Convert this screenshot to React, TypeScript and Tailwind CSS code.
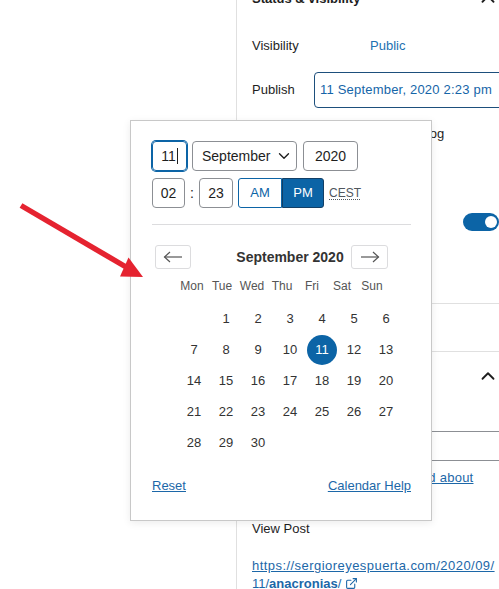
import { ChevronDown, ChevronUp, ExternalLink } from 'lucide-react';

// September 2020 starts on a Tuesday, so the first week has one blank slot
function buildWeeks(): (number | null)[][] {
  const weeks: (number | null)[][] = [];
  let week: (number | null)[] = [null];
  for (let d = 1; d <= 30; d++) {
    week.push(d);
    if (week.length === 7) {
      weeks.push(week);
      week = [];
    }
  }
  if (week.length) weeks.push(week);
  return weeks;
}

const dayNames = ['Mon', 'Tue', 'Wed', 'Thu', 'Fri', 'Sat', 'Sun'];

function NavArrow({ dir }: { dir: 'left' | 'right' }) {
  return (
    <svg width="20" height="12" viewBox="0 0 20 12" fill="none" stroke="#555" strokeWidth="1.2">
      {dir === 'left' ? (
        <>
          <path d="M1.5 6H19" />
          <path d="M7 1L1.5 6L7 11" />
        </>
      ) : (
        <>
          <path d="M1 6H18.5" />
          <path d="M13 1L18.5 6L13 11" />
        </>
      )}
    </svg>
  );
}

function DatePopover() {
  const weeks = buildWeeks();

  return (
    <div className="absolute left-[130px] top-[120px] z-10 w-[302px] border border-[#c8c8c8] bg-white pb-6 pl-[21px] pr-5 pt-5 shadow-[0_2px_8px_rgba(0,0,0,0.08)]">
      {/* day / month / year */}
      <div className="flex h-[30px] gap-[5px] text-[14px] text-[#1e1e1e]">
        <div className="flex w-[35px] items-center justify-center rounded border border-[#0c64a6] shadow-[0_0_0_1px_#0c64a6]">
          11<span className="ml-px h-4 w-px bg-[#1e1e1e]" />
        </div>
        <div className="flex w-[105px] items-center justify-between rounded border border-[#8c8f94] pl-[9px] pr-[3px]">
          <span>September</span>
          <ChevronDown size={18} strokeWidth={1.8} color="#1e1e1e" />
        </div>
        <div className="ml-px flex w-[55px] items-center justify-center rounded border border-[#8c8f94]">2020</div>
      </div>

      {/* time */}
      <div className="mt-[7px] flex h-[30px] items-center text-[14px] text-[#1e1e1e]">
        <div className="flex h-full w-[33px] items-center justify-center rounded border border-[#8c8f94]">02</div>
        <span className="w-[14px] text-center">:</span>
        <div className="flex h-full w-[34px] items-center justify-center rounded border border-[#8c8f94]">23</div>
        <div className="ml-[5px] flex h-full text-[13px]">
          <button className="w-[44px] rounded-l-[3px] border border-[#0c64a6] bg-white text-[#0c64a6]">AM</button>
          <button className="w-[42px] rounded-r-[3px] border border-[#123f66] bg-[#0c64a6] text-white">PM</button>
        </div>
        <abbr className="ml-[5px] text-[12px] text-[#50575e] underline decoration-dotted underline-offset-2">
          CEST
        </abbr>
      </div>

      <div className="mt-4 h-px bg-[#dcdcde]" />

      {/* month navigation */}
      <div className="ml-[3px] mt-5 flex h-6 items-center">
        <button className="flex h-6 w-[36px] items-center justify-center rounded-[3px] border border-[#dcdcde] bg-white">
          <NavArrow dir="left" />
        </button>
        <div className="w-[160px] pl-[38px] text-center text-[14px] font-bold text-[#333]">September 2020</div>
        <button className="flex h-6 w-[37px] items-center justify-center rounded-[3px] border border-[#dcdcde] bg-white">
          <NavArrow dir="right" />
        </button>
      </div>

      {/* weekday headings */}
      <div className="ml-[25px] mt-[9px] grid h-4 grid-cols-[repeat(7,30px)] text-center text-[12px] leading-4 text-[#555]">
        {dayNames.map((d) => (
          <span key={d}>{d}</span>
        ))}
      </div>

      {/* days */}
      <div className="ml-[26px] mt-[9px] grid grid-cols-[repeat(7,32px)] text-[13px] text-[#333]">
        {weeks.flat().map((day, i) => (
          <div key={i} className="flex h-[31px] items-center justify-center">
            {day === 11 ? (
              <span className="flex size-[30px] items-center justify-center rounded-full bg-[#0c64a6] text-white">
                {day}
              </span>
            ) : (
              day
            )}
          </div>
        ))}
      </div>

      <div className="mt-[18px] flex h-5 items-center justify-between text-[13px] text-[#1c67a8] underline">
        <a href="#">Reset</a>
        <a href="#">Calendar Help</a>
      </div>
    </div>
  );
}

function Sidebar() {
  return (
    <aside className="ml-[236px] min-h-full w-[290px] border-l border-[#e0e0e0]">
      {/* Status & visibility */}
      <section className="border-b border-[#e0e0e0] px-[15px] pb-4">
        <div className="-mt-[11px] flex h-5 items-center justify-between">
          <h2 className="font-semibold">Status &amp; visibility</h2>
          <ChevronUp size={22} strokeWidth={2} color="#1e1e1e" className="mr-[12px]" />
        </div>

        <div className="mt-[27px] flex h-5 items-center">
          <span className="w-[118px]">Visibility</span>
          <a href="#" className="text-[#2271b1]">Public</a>
        </div>

        <div className="mt-4 flex h-9 items-center">
          <span className="w-[62px]">Publish</span>
          <button className="h-9 flex-1 whitespace-nowrap rounded-sm border border-[#1d4f7c] px-[5px] text-left tracking-[0.2px] text-[#1565a8]">
            11 September, 2020 2:23 pm
          </button>
        </div>

        <div className="mt-4 flex h-5 items-center">
          <span className="size-4 rounded-sm border border-[#757575]" />
          <span className="ml-[26px] whitespace-nowrap">Stick to the top of the blog</span>
        </div>

        <div className="mt-3 flex h-5 items-center">
          <span className="size-4 rounded-sm border border-[#757575]" />
          <span className="ml-[26px]">Pending review</span>
        </div>

        <div className="mt-[37px] flex h-[18px] items-center">
          <span className="flex-1">Enable AMP</span>
          <span className="mr-[12px] flex h-[18px] w-9 items-center justify-end rounded-full bg-[#0c64a6] pr-[2px]">
            <span className="size-[12px] rounded-full bg-white" />
          </span>
        </div>

        <div className="mt-6 flex h-8 items-center">
          <button className="h-8 rounded-sm border border-[#cc1818] px-3 text-[#cc1818]">Move to trash</button>
        </div>
      </section>

      {/* Revisions */}
      <section className="flex h-12 items-center border-b border-[#e0e0e0] px-[15px]">
        <span>3 Revisions</span>
      </section>

      {/* Permalink */}
      <section className="px-[15px]">
        <div className="flex h-12 items-center justify-between">
          <h2 className="font-semibold">Permalink</h2>
          <ChevronUp size={22} strokeWidth={2} color="#1e1e1e" className="mr-[12px]" />
        </div>
        <div className="mt-[3px] h-5 leading-5">URL Slug</div>
        <div className="mt-2 flex h-[30px] items-center rounded-sm border border-[#8c8f94] px-2">anacronias</div>
        <p className="mt-[7px] leading-5 tracking-[0.25px]">
          The last part of the URL.{' '}
          <a href="#" className="text-[#1c67a8] underline">
            Read about permalinks
          </a>
        </p>
        <div className="mt-[11px] h-5 leading-5">View Post</div>
        <a href="#" className="mt-[18px] block leading-[18px] text-[#1c67a8] underline">
          <span className="tracking-[0.45px]">https://sergioreyespuerta.com/2020/09/</span>
          <br />
          11/<span className="font-bold">anacronias</span>/
          <ExternalLink size={13} className="ml-1 inline align-[-2px]" />
        </a>
      </section>
    </aside>
  );
}

export default function App() {
  return (
    <div className="relative h-[589px] w-[499px] overflow-hidden bg-white font-['Liberation_Sans',Arial,sans-serif] text-[13px] text-[#1e1e1e]">
      <Sidebar />
      <DatePopover />

      {/* red annotation arrow */}
      <svg className="pointer-events-none absolute left-0 top-0 z-20" width="160" height="300">
        <line x1="21" y1="205.5" x2="126" y2="267" stroke="#e52330" strokeWidth="5.5" />
        <polygon points="143,277 120,276.5 128.5,257.5" fill="#e52330" />
      </svg>
    </div>
  );
}
